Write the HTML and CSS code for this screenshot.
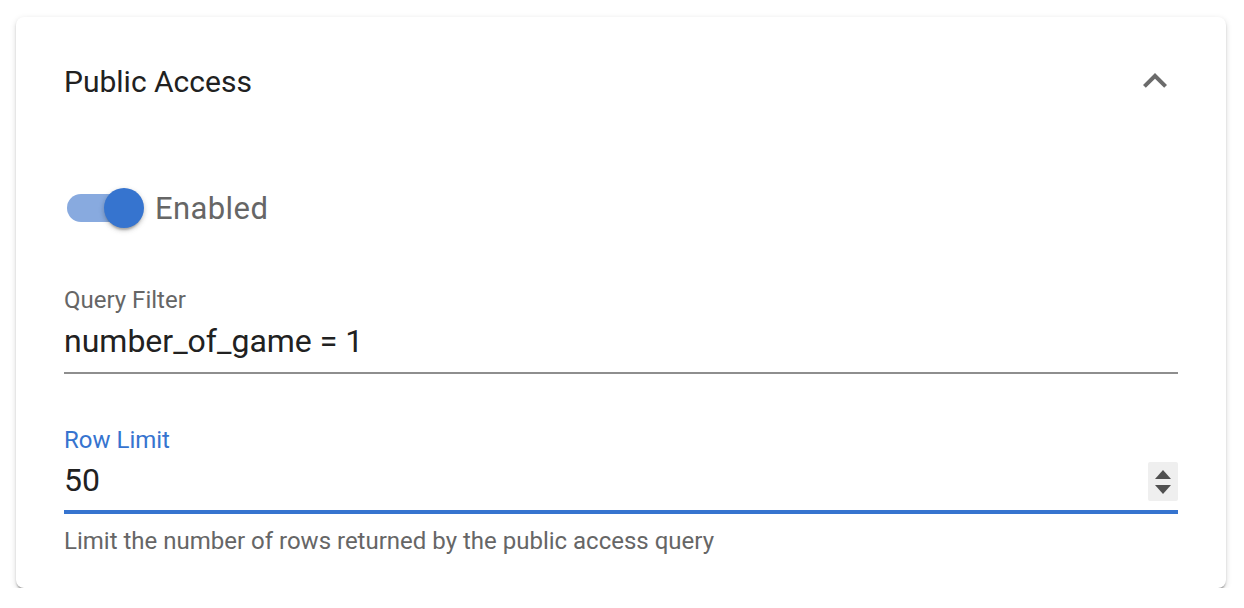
FILE: index.html
```html
<!DOCTYPE html>
<html>
<head>
<meta charset="utf-8">
<link rel="stylesheet" href="styles.css">
</head>
<body>
<div class="card">
  <div class="summary">
    <div class="title">Public Access</div>
    <svg class="chev" viewBox="0 0 24 24" width="48" height="48"><path d="M12 8l-6 6 1.41 1.41L12 10.83l4.59 4.58L18 14z" fill="#6b6b6b"/></svg>
  </div>
  <div class="details">
    <div class="switch-row">
      <div class="switch">
        <div class="track"></div>
        <div class="thumb"></div>
      </div>
      <span class="switch-label">Enabled</span>
    </div>
    <div class="field">
      <div class="label">Query Filter</div>
      <div class="input">number_of_game = 1</div>
    </div>
    <div class="field focused">
      <div class="label">Row Limit</div>
      <div class="input">
        <span>50</span>
        <div class="spinner">
          <svg width="16" height="9" viewBox="0 0 16 9"><path d="M8 0 L16 9 L0 9z" fill="#505050"/></svg>
          <svg width="16" height="9" viewBox="0 0 16 9"><path d="M0 0 L16 0 L8 9z" fill="#505050"/></svg>
        </div>
      </div>
      <div class="helper">Limit the number of rows returned by the public access query</div>
    </div>
  </div>
</div>
</body>
</html>
```

FILE: styles.css
```css
html, body {
  margin: 0;
  padding: 0;
  background: #ffffff;
}
body {
  font-family: Roboto, "Liberation Sans", sans-serif;
  padding: 17px 18px 0 16px;
}
.card {
  width: 1210px;
  height: 571px;
  box-sizing: border-box;
  background: #fff;
  border-radius: 8px;
  box-shadow: 0 4px 2px -2px rgba(0,0,0,0.26), 0 2px 2px 0 rgba(0,0,0,0.16), 0 2px 6px 0 rgba(0,0,0,0.14);
}
.summary {
  height: 128px;
  display: flex;
  align-items: center;
  justify-content: space-between;
  padding: 0 47px 0 48px;
}
.title {
  font-size: 30px;
  color: #212121;
}
.chev {
  display: block;
}
.details {
  padding: 25px 48px 0 48px;
}
.switch-row {
  height: 76px;
  display: flex;
  align-items: center;
}
.switch {
  position: relative;
  width: 80px;
  height: 40px;
  margin-left: 3px;
}
.track {
  position: absolute;
  left: 0;
  top: 6px;
  width: 68px;
  height: 28px;
  border-radius: 14px;
  background: #88aadf;
}
.thumb {
  position: absolute;
  left: 37px;
  top: 0;
  width: 40px;
  height: 40px;
  border-radius: 50%;
  background: #3674cf;
  box-shadow: 0 4px 2px -2px rgba(0,0,0,0.2), 0 2px 4px 0 rgba(0,0,0,0.14), 0 2px 6px 0 rgba(0,0,0,0.12);
}
.switch-label {
  margin-left: 8px;
  font-size: 31px;
  color: #666;
  letter-spacing: 0.4px;
}
.field {
  margin-top: 36px;
}
.field.focused {
  margin-top: 48px;
}
.label {
  font-size: 24px;
  line-height: 36px;
  color: #666;
}
.focused .label {
  color: #3674cf;
}
.input {
  font-size: 32px;
  line-height: 46px;
  color: #212121;
  padding-bottom: 8px;
  border-bottom: 2px solid #8e8e8e;
  display: flex;
  align-items: center;
  justify-content: space-between;
}
.focused .input {
  line-height: 44px;
  padding-bottom: 8px;
  border-bottom: 4px solid #3674cf;
}
.spinner {
  width: 30px;
  height: 39px;
  background: #efefef;
  border-radius: 2px;
  display: flex;
  flex-direction: column;
  align-items: center;
  justify-content: center;
  gap: 6px;
  margin-top: 3px;
}
.spinner svg {
  display: block;
}
.helper {
  margin-top: 9px;
  font-size: 24px;
  line-height: 36px;
  color: #666;
}
```
